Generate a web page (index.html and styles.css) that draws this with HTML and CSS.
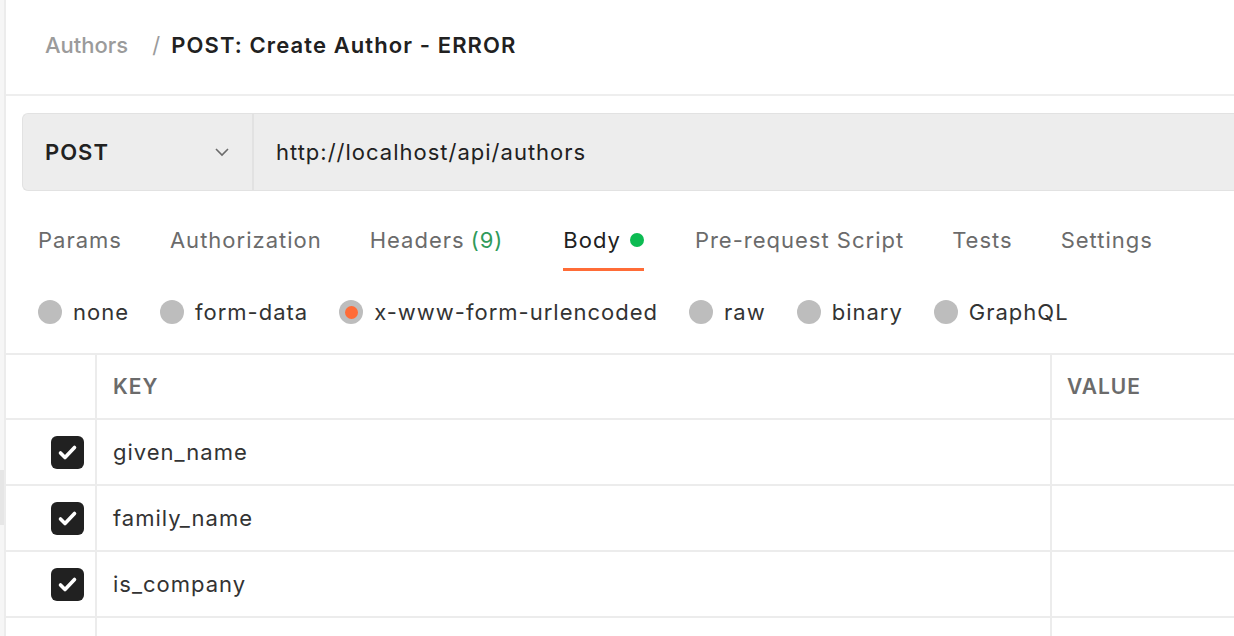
FILE: index.html
```html
<!DOCTYPE html>
<html lang="en">
<head>
<meta charset="utf-8">
<title>POST: Create Author - ERROR</title>
<link rel="stylesheet" href="styles.css">
</head>
<body>
<div class="app">
  <aside class="edge"><div class="edge-block"></div></aside>
  <main class="main">
    <header class="breadcrumb">
      <span class="crumb-parent">Authors</span>
      <span class="crumb-sep">/</span>
      <span class="crumb-title">POST: Create Author - ERROR</span>
    </header>

    <div class="request">
      <div class="urlbar">
        <div class="method">
          <span class="method-name">POST</span>
          <svg class="chevron" width="16" height="10" viewBox="0 0 16 10"><path d="M2 2 L8 8 L14 2" fill="none" stroke="#6b6b6b" stroke-width="1.6"/></svg>
        </div>
        <div class="url">http://localhost/api/authors</div>
      </div>
    </div>

    <nav class="tabs">
      <span class="tab">Params</span>
      <span class="tab">Authorization</span>
      <span class="tab">Headers <span class="count">(9)</span></span>
      <span class="tab active">Body <span class="dot"></span></span>
      <span class="tab">Pre-request Script</span>
      <span class="tab">Tests</span>
      <span class="tab">Settings</span>
    </nav>

    <div class="radios">
      <label class="radio"><span class="circle"></span>none</label>
      <label class="radio"><span class="circle"></span>form-data</label>
      <label class="radio"><span class="circle checked"></span>x-www-form-urlencoded</label>
      <label class="radio"><span class="circle"></span>raw</label>
      <label class="radio"><span class="circle"></span>binary</label>
      <label class="radio"><span class="circle"></span>GraphQL</label>
    </div>

    <div class="table">
      <div class="row head">
        <div class="cell check"></div>
        <div class="cell key">KEY</div>
        <div class="cell value">VALUE</div>
      </div>
      <div class="row">
        <div class="cell check"><span class="box"><svg width="33" height="33" viewBox="0 0 33 33"><path d="M9.5 17 L14 21.5 L23.5 11.5" fill="none" stroke="#fff" stroke-width="3.6" stroke-linecap="round" stroke-linejoin="round"/></svg></span></div>
        <div class="cell key">given_name</div>
        <div class="cell value"></div>
      </div>
      <div class="row">
        <div class="cell check"><span class="box"><svg width="33" height="33" viewBox="0 0 33 33"><path d="M9.5 17 L14 21.5 L23.5 11.5" fill="none" stroke="#fff" stroke-width="3.6" stroke-linecap="round" stroke-linejoin="round"/></svg></span></div>
        <div class="cell key">family_name</div>
        <div class="cell value"></div>
      </div>
      <div class="row">
        <div class="cell check"><span class="box"><svg width="33" height="33" viewBox="0 0 33 33"><path d="M9.5 17 L14 21.5 L23.5 11.5" fill="none" stroke="#fff" stroke-width="3.6" stroke-linecap="round" stroke-linejoin="round"/></svg></span></div>
        <div class="cell key">is_company</div>
        <div class="cell value"></div>
      </div>
      <div class="row">
        <div class="cell check"></div>
        <div class="cell key"></div>
        <div class="cell value"></div>
      </div>
    </div>
  </main>
</div>
</body>
</html>
```

FILE: styles.css
```css
* { box-sizing: border-box; }
html, body { margin: 0; padding: 0; background: #fff; }
body {
  font-family: Inter, "Noto Sans", "Liberation Sans", sans-serif;
  color: #212121;
  width: 1234px;
  height: 636px;
  overflow: hidden;
}
.app { display: flex; height: 636px; }
.edge {
  width: 4px;
  flex: none;
  background: #f6f6f6;
  padding-top: 470px;
}
.edge-block { height: 55px; background: #e6e6e6; }
.main {
  flex: 1;
  min-width: 0;
  border-left: 2px solid #ececec;
  overflow: hidden;
}
.breadcrumb {
  height: 96px;
  border-bottom: 2px solid #eeeeee;
  display: flex;
  align-items: center;
  padding-left: 39px;
  padding-bottom: 4px;
  font-size: 22px;
  white-space: nowrap;
}
.crumb-parent { color: #9b9b9b; font-weight: 500; }
.crumb-sep { color: #9b9b9b; margin: 0 11px 0 24px; }
.crumb-title { font-weight: 600; color: #212121; letter-spacing: 1.1px; }

.request { padding: 17px 0 0 16px; }
.urlbar {
  display: flex;
  height: 78px;
  background: #ededed;
  border: 1px solid #e2e2e2;
  border-right: none;
  border-radius: 6px 0 0 6px;
}
.method {
  width: 231px;
  flex: none;
  display: flex;
  align-items: center;
  justify-content: space-between;
  padding: 0 22px 0 22px;
  border-right: 2px solid #e2e2e2;
}
.method-name { font-size: 22px; font-weight: 600; color: #212121; letter-spacing: 1px; }
.url {
  display: flex;
  align-items: center;
  padding-left: 22px;
  font-size: 22px;
  letter-spacing: 1px;
  color: #212121;
  white-space: nowrap;
}

.tabs {
  display: flex;
  gap: 48px;
  padding-left: 32px;
  white-space: nowrap;
}
.tab {
  font-size: 22px;
  letter-spacing: 1px;
  color: #6b6b6b;
  line-height: 30px;
  padding: 34px 0 13px;
  border-bottom: 3px solid transparent;
  display: flex;
  align-items: center;
  gap: 6px;
}
.tab .count { color: #2f9a5a; }
.tab.active { color: #212121; border-bottom-color: #ff6c37; gap: 9px; margin: 0 3px 0 12px; }
.dot { width: 14px; height: 14px; border-radius: 50%; background: #0cbb52; display: inline-block; }

.radios {
  height: 82px;
  display: flex;
  align-items: center;
  gap: 31px;
  padding-left: 32px;
  white-space: nowrap;
}
.radio {
  display: flex;
  align-items: center;
  gap: 11px;
  font-size: 22px;
  letter-spacing: 1px;
  color: #333;
}
.circle {
  width: 24px;
  height: 24px;
  border-radius: 50%;
  background: #bdbdbd;
  display: inline-flex;
  align-items: center;
  justify-content: center;
}
.circle.checked::after {
  content: "";
  width: 13px;
  height: 13px;
  border-radius: 50%;
  background: #ff6c37;
}

.table { border-top: 2px solid #ececec; }
.row {
  display: flex;
  height: 66px;
  border-bottom: 2px solid #ececec;
}
.row.head { height: 65px; }
.cell { display: flex; align-items: center; font-size: 22px; letter-spacing: 1px; color: #333; }
.cell.check { width: 89px; flex: none; padding-left: 45px; }
.cell.key { width: 955px; flex: none; border-left: 2px solid #ececec; padding-left: 16px; }
.cell.value { flex: 1; border-left: 2px solid #ececec; padding-left: 15px; }
.head .cell { font-size: 21px; font-weight: 600; color: #6b6b6b; letter-spacing: 1px; }
.box {
  width: 33px;
  height: 33px;
  border-radius: 6px;
  background: #212121;
  display: flex;
}
```
